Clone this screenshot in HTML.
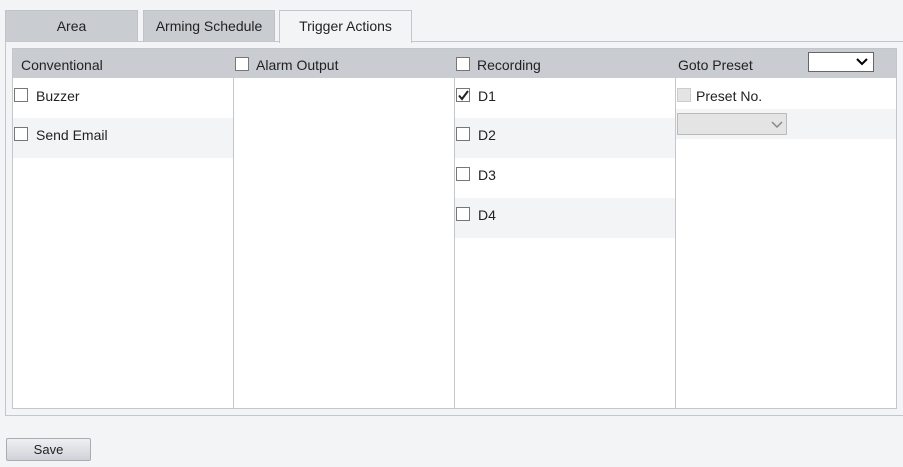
<!DOCTYPE html>
<html><head><style>
*{margin:0;padding:0;box-sizing:border-box}
body{width:903px;height:467px;background:#f3f4f6;font-family:"Liberation Sans",sans-serif;font-size:14px;color:#222;position:relative;overflow:hidden}
.a{position:absolute}
.tab{position:absolute;top:10px;height:31px;background:#c9ccd1;border:1px solid #bfc3c8;border-bottom:none;text-align:center;line-height:31px;color:#222}
.cb{position:absolute;width:14px;height:14px;border:1px solid #777;background:#fff}
.t{position:absolute;line-height:16px}
</style></head><body>
<div class="tab" style="left:5px;width:133px">Area</div>
<div class="tab" style="left:143px;width:132px">Arming Schedule</div>
<div class="a" style="left:5px;top:41px;width:898px;height:375px;border:1px solid #c3c6ca;border-right:none;background:#f3f4f6"></div>
<div class="tab" style="left:279px;width:133px;height:33px;background:#f3f4f6;border-color:#c3c6ca">Trigger Actions</div>
<div class="a" style="left:12px;top:48px;width:885px;height:361px;border:1px solid #c3c6ca;background:#fff"></div>
<div class="a" style="left:13px;top:49px;width:883px;height:29px;background:#c9ccd1"></div>
<div class="a" style="left:233px;top:78px;width:1px;height:330px;background:#c3c6ca"></div>
<div class="a" style="left:454px;top:78px;width:1px;height:330px;background:#c3c6ca"></div>
<div class="a" style="left:675px;top:78px;width:1px;height:330px;background:#c3c6ca"></div>
<div class="a" style="left:13px;top:118px;width:220px;height:40px;background:#f3f4f6"></div>
<div class="a" style="left:455px;top:118px;width:220px;height:40px;background:#f3f4f6"></div>
<div class="a" style="left:455px;top:198px;width:220px;height:40px;background:#f3f4f6"></div>
<div class="a" style="left:676px;top:109px;width:220px;height:30px;background:#f3f4f6"></div>
<div class="t" style="left:21px;top:57px">Conventional</div>
<div class="cb" style="left:235px;top:57px"></div><div class="t" style="left:256px;top:57px">Alarm Output</div>
<div class="cb" style="left:456px;top:57px"></div><div class="t" style="left:477px;top:57px">Recording</div>
<div class="t" style="left:678px;top:57px">Goto Preset</div>
<div class="a" style="left:808px;top:52px;width:66px;height:20px;border:1px solid #666;background:#fff"><svg class="a" style="left:47px;top:4px" width="12" height="9"><path d="M1 2 L6 7 L11 2" stroke="#000" stroke-width="2" fill="none"/></svg></div>
<div class="cb" style="left:14px;top:88px"></div><div class="t" style="left:36px;top:88px">Buzzer</div>
<div class="cb" style="left:14px;top:127px"></div><div class="t" style="left:36px;top:127px">Send Email</div>
<div class="cb" style="left:456px;top:88px"><svg class="a" style="left:0;top:0" width="13" height="13"><path d="M2 6.5 L5 10 L11 2" stroke="#222" stroke-width="2" fill="none"/></svg></div><div class="t" style="left:478px;top:88px">D1</div>
<div class="cb" style="left:456px;top:127px"></div><div class="t" style="left:478px;top:127px">D2</div>
<div class="cb" style="left:456px;top:167px"></div><div class="t" style="left:478px;top:167px">D3</div>
<div class="cb" style="left:456px;top:207px"></div><div class="t" style="left:478px;top:207px">D4</div>
<div class="cb" style="left:677px;top:88px;background:#e4e4e4;border-color:#ccc"></div><div class="t" style="left:696px;top:88px">Preset No.</div>
<div class="a" style="left:677px;top:113px;width:110px;height:22px;border:1px solid #bbb;background:#e4e4e4"><svg class="a" style="left:93px;top:6px" width="12" height="9"><path d="M1 2 L6 7 L11 2" stroke="#888" stroke-width="1.5" fill="none"/></svg></div>
<div class="a" style="left:6px;top:438px;width:85px;height:23px;border:1px solid #a9adb2;border-radius:2px;background:linear-gradient(#eef0f2,#cfd3d8);text-align:center;line-height:21px;font-size:13px">Save</div>
</body></html>
